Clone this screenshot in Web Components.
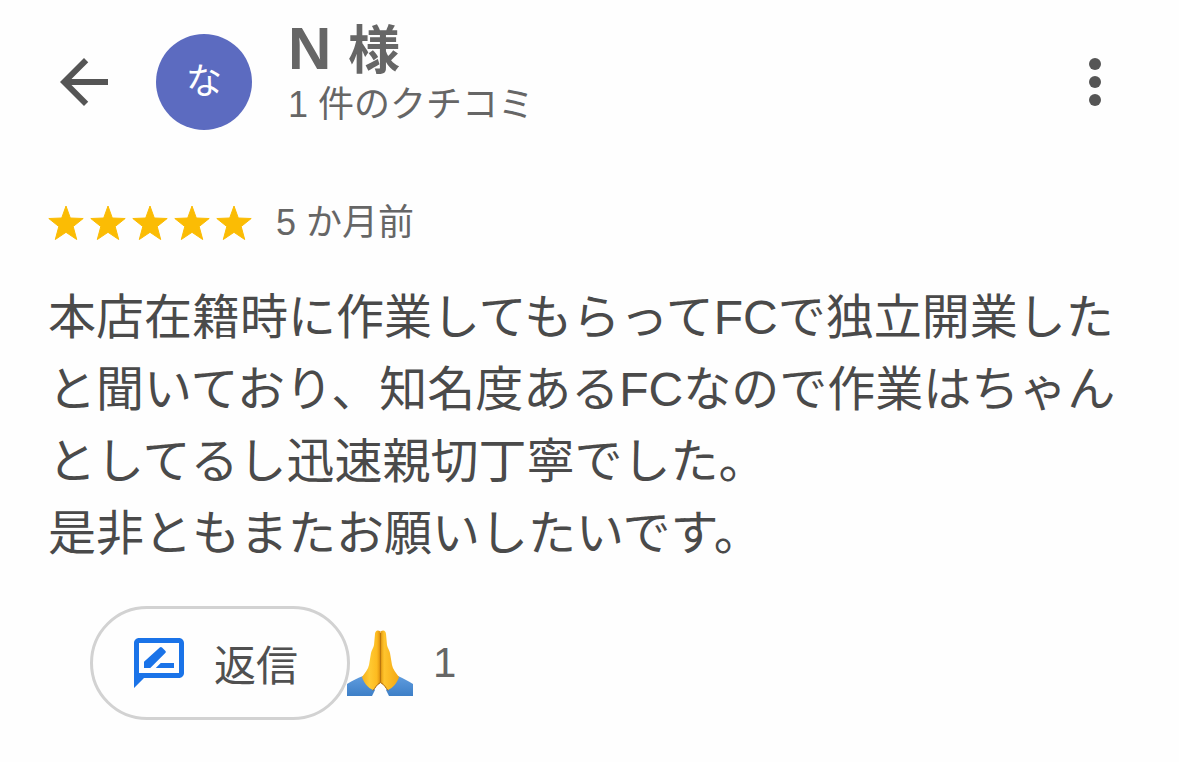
<!DOCTYPE html>
<html lang="ja">
<head>
<meta charset="utf-8">
<meta name="viewport" content="width=device-width, initial-scale=1">
<title>クチコミ</title>
<style>
body { margin: 0; background: #fefefe; color: #666; font-family: "Liberation Sans", "Noto Sans CJK JP", sans-serif; }
</style>
</head>
<body>
<review-card>
  <review-header slot="header" initial="な">
    <span slot="name">N <small>様</small></span>
    <span slot="count">1 件のクチコミ</span>
  </review-header>
  <star-rating slot="rating" value="5">5 か月前</star-rating>
  <span slot="text">本店在籍時に作業してもらってFCで独立開業したと聞いており、知名度あるFCなので作業はちゃんとしてるし迅速親切丁寧でした。<br>是非ともまたお願いしたいです。</span>
  <reply-button slot="actions">返信</reply-button>
  <reaction-count slot="actions">1</reaction-count>
</review-card>

<script>
const define = (name, html, setup) => customElements.define(name, class extends HTMLElement {
  connectedCallback() {
    if (this.shadowRoot) return;
    const t = document.createElement('template');
    t.innerHTML = html;
    this.attachShadow({ mode: 'open' }).append(t.content.cloneNode(true));
    if (setup) setup(this, this.shadowRoot);
  }
});

define('review-card', `
<style>
:host { display: block; padding: 21px 48px 36px; }
.text { margin: 35px 0 36px; font-size: 48px; line-height: 72px; color: #4a4a4a; }
.rating { margin-top: 56px; }
footer { display: flex; align-items: center; padding-left: 42px; }
</style>
<article>
  <slot name="header"></slot>
  <div class="rating"><slot name="rating"></slot></div>
  <p class="text"><slot name="text"></slot></p>
  <footer><slot name="actions"></slot></footer>
</article>`);

define('review-header', `
<style>
:host { display: block; }
header { display: flex; align-items: center; }
button { display: block; flex: none; padding: 0; border: 0; background: none; color: #555; cursor: pointer; }
svg { display: block; width: 72px; height: 72px; fill: currentColor; }
.avatar { flex: none; display: grid; place-items: center; width: 96px; height: 96px; margin: 0 36px; border-radius: 50%; background: #5c6bc0; color: #fff; font-size: 36px; line-height: 48px; }
.who { flex: 1; min-width: 0; padding-bottom: 10px; }
h1, p { margin: 0; line-height: 56px; }
h1 { font-size: 60px; font-weight: 700; color: #666; }
p { font-size: 36px; }
::slotted([slot=name]) { display: block; height: 56px; }
</style>
<header>
  <button type="button" aria-label="戻る"><svg viewBox="0 0 24 24"><path d="M20 11H7.83l5.59-5.59L12 4l-8 8 8 8 1.41-1.41L7.83 13H20v-2z"/></svg></button>
  <div class="avatar"></div>
  <div class="who">
    <h1><slot name="name"></slot></h1>
    <p><slot name="count"></slot></p>
  </div>
  <button type="button" aria-label="その他"><svg viewBox="0 0 24 24"><circle cx="12" cy="6" r="2"/><circle cx="12" cy="12" r="2"/><circle cx="12" cy="18" r="2"/></svg></button>
</header>`, (host, root) => {
  root.querySelector('.avatar').textContent = host.getAttribute('initial');
  const small = host.querySelector('small');
  if (small) small.style.fontSize = '52px';
});

define('star-rating', `
<style>
:host { display: flex; align-items: center; gap: 24px; font-size: 36px; line-height: 48px; }
.stars { display: flex; gap: 6px; }
svg { display: block; width: 36px; height: 36px; fill: #fbbc04; stroke: #fbbc04; stroke-width: 1; stroke-linejoin: round; }
</style>
<div class="stars" role="img"></div>
<span><slot></slot></span>`, (host, root) => {
  const n = Number(host.getAttribute('value'));
  const stars = root.querySelector('.stars');
  stars.setAttribute('aria-label', '星 ' + n + ' つ');
  stars.innerHTML = '<svg viewBox="0 0 36 36"><path d="M18 1l4.300 12 12.900.5-10 8 3.500 13L18 27.300 7.300 34.500l3.500-13L.8 13.500 13.700 13z"/></svg>'.repeat(n);
});

define('reply-button', `
<style>
:host { display: block; }
button { display: flex; align-items: center; gap: 30px; height: 114px; padding: 0 49px 0 41px; border: 3px solid #d2d2d2; border-radius: 57px; background: #fefefe; color: #505050; font: 400 42px/60px "Noto Sans CJK JP", sans-serif; white-space: nowrap; cursor: pointer; }
svg { display: block; width: 50px; height: 50px; fill: #1a73e8; }
</style>
<button type="button">
  <svg viewBox="2 2 20 20" aria-hidden="true"><path d="M20 2H4c-1.100 0-2 .9-2 2v18l4-4h14c1.100 0 2-.9 2-2V4c0-1.100-.9-2-2-2zm0 14H4V4h16v12z"/><path d="M6 14h2.500l6-6c.3-.3.3-.6 0-.9l-1.300-1.300c-.3-.3-.6-.3-.9 0L6 11.500zM18 14h-7.300l2-2H18z"/></svg>
  <slot></slot>
</button>`);

define('reaction-count', `
<style>
:host { display: flex; align-items: center; gap: 20px; margin-left: -3px; font-size: 42px; line-height: 60px; }
svg { display: block; width: 66px; height: 66px; }
</style>
<svg viewBox="0 0 66 66" role="img" aria-label="合掌">
  <defs>
    <linearGradient id="l"><stop offset="0" stop-color="#f5b01c"/><stop offset=".4" stop-color="#ffca33"/><stop offset=".8" stop-color="#fdbb20"/><stop offset="1" stop-color="#e0900c"/></linearGradient>
    <linearGradient id="r"><stop offset="0" stop-color="#e39a10"/><stop offset=".2" stop-color="#ffc42d"/><stop offset="1" stop-color="#f3a814"/></linearGradient>
    <linearGradient id="s" x2="0" y2="1"><stop offset="0" stop-color="#5f9cde"/><stop offset="1" stop-color="#3d7fc7"/></linearGradient>
  </defs>
  <path d="M0 54C5 51 10 48 16 46l12 14-3 6H0z" fill="url(#s)"/>
  <path d="M66 54C61 51 56 48 51 46L39 60l3 6h24z" fill="url(#s)"/>
  <path d="M33.500 1.500c-3-2-5.200-1-5.500 2.500L27 15c-.4 3-2.500 5-3 8L22 35c-.7 4-4 8-7 12 2 6 6 11 11 13 2-1 3-5 7.500-7z" fill="url(#l)"/>
  <path d="M33.500 1.500c3-2 5.200-1 5.500 2.500l1 11c.4 3 2.500 5 3 8l2 12c.7 4 4 8 7 12-2 6-6 11-11 13-2-1-3-5-7.500-7z" fill="url(#r)"/>
  <path d="M33.500 3v49" stroke="#b9750f" stroke-width="1.200"/>
  <path d="M26 60.500c2-2 3.500-6 7.500-8 4 2 5.500 6 7.500 8" fill="none" stroke="#a8650c" stroke-width="1"/>
</svg>
<span><slot></slot></span>`);
</script>
</body>
</html>
